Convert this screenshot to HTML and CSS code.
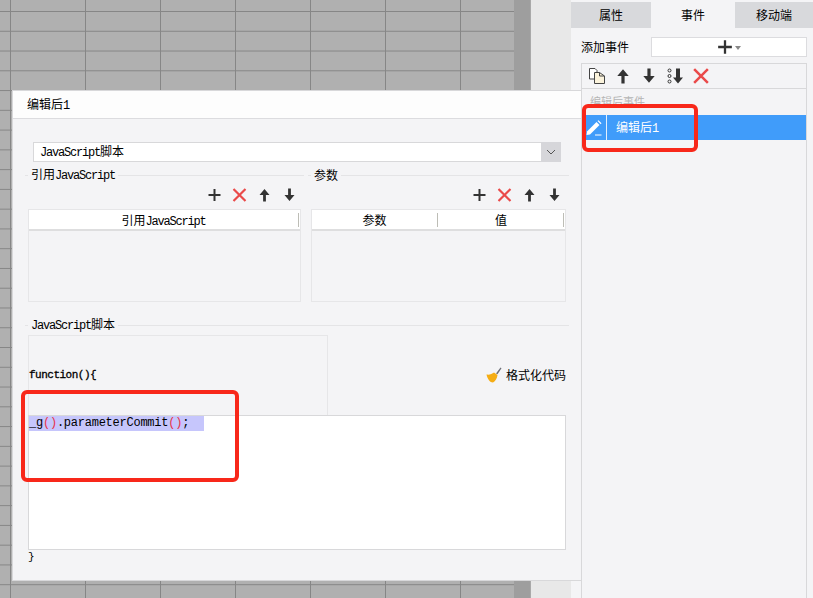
FILE: index.html
```html
<!DOCTYPE html>
<html lang="zh">
<head>
<meta charset="utf-8">
<title>编辑后1</title>
<link rel="stylesheet" href="styles.css">
</head>
<body>
<svg class="defs" width="0" height="0" aria-hidden="true">
  <symbol id="i-plus" viewBox="0 0 14 14"><path d="M7 1v12M1 7h12" stroke="#333" stroke-width="2" fill="none"/></symbol>
  <symbol id="i-x" viewBox="0 0 14 14"><path d="M1 1l12 12M13 1L1 13" stroke="#ea4a4a" stroke-width="2.2" fill="none"/></symbol>
  <symbol id="i-up" viewBox="0 0 14 14"><path d="M7 1L2 7h3.600v6.500h2.800V7H12z" fill="#333"/></symbol>
  <symbol id="i-down" viewBox="0 0 14 14"><path d="M7 13L2 7h3.600V.5h2.800V7H12z" fill="#333"/></symbol>
</svg>

<div class="app">
  <div class="sheet">
    <div class="grid"></div>
    <div class="scroll"></div>
  </div>
  <div class="gutter"></div>
  <aside class="side">
    <div class="tabs">
      <div class="tab">属性</div>
      <div class="tab tab-active">事件</div>
      <div class="tab">移动端</div>
    </div>
    <div class="side-body">
      <div class="add-row">
        <span class="add-label">添加事件</span>
        <div class="add-btn">
          <svg class="ic-add" viewBox="0 0 14 14"><use href="#i-plus"/></svg>
          <span class="caret"></span>
        </div>
      </div>
      <div class="events">
        <div class="events-bar">
          <span class="cell">
            <svg class="ic" viewBox="0 0 16 16"><path d="M.5.5h5.500l2 2V11H.5z" fill="#fff" stroke="#444"/><path d="M5.500 4.500h5l5 3.500v7.500h-10z" fill="#fbf3dc" stroke="#444"/><path d="M10.500 4.500V8h5" fill="none" stroke="#444"/></svg>
          </span>
          <span class="cell"><svg class="ic" viewBox="0 0 14 14"><use href="#i-up"/></svg></span>
          <span class="cell"><svg class="ic" viewBox="0 0 14 14"><use href="#i-down"/></svg></span>
          <span class="cell">
            <svg class="ic-multi" viewBox="0 0 17 16"><circle cx="2.500" cy="2.500" r="1.500" fill="none" stroke="#333"/><circle cx="2.500" cy="8" r="1.500" fill="none" stroke="#333"/><circle cx="2.500" cy="13.500" r="1.500" fill="none" stroke="#333"/><path d="M11 15.500L6 9.500h3V.5h4v9h3z" fill="#333"/></svg>
          </span>
          <span class="cell"><svg class="ic" viewBox="0 0 14 14"><use href="#i-x"/></svg></span>
        </div>
        <div class="group-label">编辑后事件</div>
        <div class="event-row">
          <span class="event-icon">
            <svg class="ic-pen" viewBox="0 0 16 16"><path d="M1 11.500L10.500 2l3 3L4 14.500l-3.500.5z" fill="#fff"/><path d="M11.500 1l1-.8 3 3-.8 1z" fill="#fff"/><path d="M9 15h6.500" stroke="#fff" fill="none"/></svg>
          </span>
          <span class="event-name">编辑后<span class="lat">1</span></span>
        </div>
      </div>
    </div>
  </aside>
</div>

<section class="dialog">
  <header class="dialog-title">编辑后<span class="lat">1</span></header>
  <div class="dialog-body">
    <div class="select">
      <span class="select-text"><span class="lat">JavaScript</span>脚本</span>
      <span class="select-btn">
        <svg class="chev" viewBox="0 0 10 6"><path d="M1 1l4 4 4-4" fill="none" stroke="#555"/></svg>
      </span>
    </div>

    <div class="refs">
      <div class="ref ref-left">
        <div class="legend"><span>引用<span class="lat">JavaScript</span></span></div>
        <div class="tools">
          <svg class="tool" viewBox="0 0 14 14"><use href="#i-plus"/></svg>
          <svg class="tool" viewBox="0 0 14 14"><use href="#i-x"/></svg>
          <svg class="tool" viewBox="0 0 14 14"><use href="#i-up"/></svg>
          <svg class="tool" viewBox="0 0 14 14"><use href="#i-down"/></svg>
        </div>
        <div class="table table-left">
          <div class="thead"><div class="th">引用<span class="lat">JavaScript</span></div></div>
          <div class="tbody"></div>
        </div>
      </div>
      <div class="ref ref-right">
        <div class="legend"><span>参数</span></div>
        <div class="tools">
          <svg class="tool" viewBox="0 0 14 14"><use href="#i-plus"/></svg>
          <svg class="tool" viewBox="0 0 14 14"><use href="#i-x"/></svg>
          <svg class="tool" viewBox="0 0 14 14"><use href="#i-up"/></svg>
          <svg class="tool" viewBox="0 0 14 14"><use href="#i-down"/></svg>
        </div>
        <div class="table">
          <div class="thead">
            <div class="th th-p">参数</div>
            <div class="th th-v">值</div>
          </div>
          <div class="tbody"></div>
        </div>
      </div>
    </div>

    <div class="script">
      <div class="legend"><span><span class="lat">JavaScript</span>脚本</span></div>
      <div class="script-inner">
        <div class="script-head">
          <div class="fn-box"><span class="fn">function(){</span></div>
          <div class="format">
            <svg class="broom" viewBox="0 0 16 16"><path d="M10 6.500L14.500.5l1 .8-4 6z" fill="#6d6f78"/><path d="M.5 7.500c3 .5 5.500-.5 7.500-2l3.500 2.500c-.5 3.500-2 6-4.500 7.500C4 15.500 1.500 12 .5 7.500z" fill="#f5ad14"/></svg>
            <span>格式化代码</span>
          </div>
        </div>
        <div class="editor"><div class="code"><span class="sel">_g<i>()</i>.parameterCommit<i>()</i>;</span></div></div>
        <div class="close-brace">}</div>
      </div>
    </div>
  </div>
</section>

<div class="mark mark-side"></div>
<div class="mark mark-code"></div>
</body>
</html>
```
FILE: styles.css
```css
* { box-sizing: border-box; }
html, body { margin: 0; padding: 0; }
body {
  width: 813px;
  height: 598px;
  overflow: hidden;
  position: relative;
  background: #f4f4f6;
  color: #000;
  font: 12px/14px "Noto Sans CJK SC", "Liberation Sans", sans-serif;
}
.defs { position: absolute; }
.lat {
  font-family: "Liberation Mono", "Noto Sans CJK SC", monospace;
  font-size: 12px;
  letter-spacing: -1.2px;
}
.app { display: flex; height: 598px; }

.sheet { display: flex; width: 531px; flex: none; }
.grid {
  width: 514px;
  background-color: #b0b0b0;
  background-image:
    linear-gradient(90deg, #868686 1px, transparent 1px),
    linear-gradient(#868686 1px, transparent 1px);
  background-size: 75px 100%, 100% 19.78px;
  background-position: 10px 0, 0 11px;
}
.scroll { flex: 1; background: #9e9e9e; border-right: 1px solid #a9a9a9; }
.gutter { width: 40px; flex: none; background: #e8e8e8; }

.side { flex: 1; display: flex; flex-direction: column; }
.tabs {
  margin-top: 2px;
  height: 25px;
  display: grid;
  grid-template-columns: 80px 84px 78px;
  flex: none;
}
.tab {
  background: #d8d9dc;
  text-align: center;
  line-height: 26px;
}
.tab-active { background: #f4f4f6; }
.side-body { flex: 1; padding: 10px 6px 0 10px; display: flex; flex-direction: column; }
.add-row { display: flex; height: 20px; align-items: center; }
.add-label { width: 70px; flex: none; }
.add-btn {
  flex: 1;
  height: 20px;
  background: #fff;
  border: 1px solid #dcdcdf;
  display: flex;
  align-items: center;
  justify-content: center;
}
.ic-add { width: 16px; height: 16px; }
.caret {
  width: 0;
  height: 0;
  margin: 2px 0 0 2px;
  border-left: 3px solid transparent;
  border-right: 3px solid transparent;
  border-top: 4px solid #888;
}
.events {
  margin-top: 6px;
  flex: 1;
  border: 1px solid #d8d8da;
  border-bottom: 0;
}
.events-bar {
  height: 25px;
  border-bottom: 1px solid #d8d8da;
  display: flex;
  align-items: center;
  padding-left: 2px;
}
.cell { width: 26px; display: flex; justify-content: center; }
.ic { width: 16px; height: 16px; }
.ic-multi { width: 17px; height: 16px; }
.group-label {
  height: 26px;
  padding: 5px 0 0 8px;
  color: #b5b5b5;
  font-size: 11px;
}
.event-row {
  height: 25px;
  background: #409cfa;
  color: #fff;
  display: flex;
  align-items: center;
}
.event-icon {
  width: 25px;
  height: 25px;
  border-right: 1px solid #e4f0fd;
  display: flex;
  align-items: center;
  justify-content: center;
}
.ic-pen { width: 16px; height: 16px; }
.event-name { margin-left: 9px; }

.dialog {
  position: absolute;
  left: 12px;
  top: 90px;
  width: 570px;
  height: 491px;
  background: #f4f4f6;
  border: 1px solid #d8d8da;
}
.dialog-title {
  height: 28px;
  padding: 6px 0 0 14px;
  background: #fdfdfd;
  border-bottom: 1px solid #dcdcdf;
}
.dialog-body { padding-top: 23px; }
.select {
  margin-left: 20px;
  width: 528px;
  height: 20px;
  background: #fff;
  border: 1px solid #d8d8da;
  border-right: 0;
  display: flex;
  align-items: center;
  justify-content: space-between;
}
.select-text { padding-left: 6px; }
.select-btn {
  width: 20px;
  height: 20px;
  margin: -1px 0;
  background: #d6d6da;
  display: flex;
  align-items: center;
  justify-content: center;
}
.chev { width: 10px; height: 6px; }

.refs {
  margin: 6px 0 0 12px;
  display: grid;
  grid-template-columns: 279px 261px;
  column-gap: 4px;
}
.legend { display: flex; align-items: center; height: 14px; }
.legend::before { content: ""; width: 3px; height: 1px; background: #e4e4e6; }
.legend::after { content: ""; flex: 1; height: 1px; background: #e4e4e6; }
.legend > span { margin: 0 3px; white-space: nowrap; }
.tools { display: flex; justify-content: flex-end; margin-top: 6px; padding-right: 2px; height: 14px; }
.tool { width: 15px; height: 14px; margin: 0 5px; }
.table { margin: 7px 3px 0 3px; height: 93px; border: 1px solid #e6e6e8; display: flex; flex-direction: column; }
.table-left { margin-right: 3px; }
.thead {
  height: 21px;
  background: #fff;
  border-bottom: 2px solid #dededf;
  display: flex;
  flex: none;
}
.th {
  flex: 1;
  text-align: center;
  line-height: 20px;
  position: relative;
  padding-right: 2px;
}
.th::after {
  content: "";
  position: absolute;
  right: 1px;
  top: 3px;
  height: 14px;
  width: 1px;
  background: #bdbdb6;
}
.th-p { flex: 0 0 127px; }
.tbody { flex: 1; }

.script { margin: 16px 0 0 12px; width: 544px; }
.script-inner { margin-left: 3px; }
.script-head {
  margin-top: 3px;
  width: 538px;
  height: 80px;
  display: flex;
  align-items: center;
  justify-content: space-between;
}
.fn-box {
  width: 300px;
  height: 80px;
  border: 1px solid #e6e6e8;
  border-bottom: 0;
  display: flex;
  align-items: center;
  padding-bottom: 2px;
}
.fn {
  font: 11px/14px "Liberation Mono", monospace;
  letter-spacing: -.5px;
  -webkit-text-stroke: .3px #000;
}
.format { display: flex; align-items: center; gap: 4px; margin-top: -1px; }
.broom { width: 16px; height: 16px; }
.editor {
  width: 538px;
  height: 135px;
  background: #fff;
  border: 1px solid #d8d8da;
}
.code {
  font: 12px/15px "Liberation Mono", monospace;
  letter-spacing: -.24px;
}
.sel { display: inline-block; background: #c6c6fc; width: 175px; }
.sel i { font-style: normal; color: #e8324a; }
.close-brace { font: 11px/14px "Liberation Mono", monospace; }

.mark {
  position: absolute;
  border: 4px solid #f8281a;
  border-radius: 6px;
}
.mark-side { left: 582px; top: 104px; width: 116px; height: 48px; }
.mark-code { left: 21px; top: 390px; width: 218px; height: 92px; }
```
